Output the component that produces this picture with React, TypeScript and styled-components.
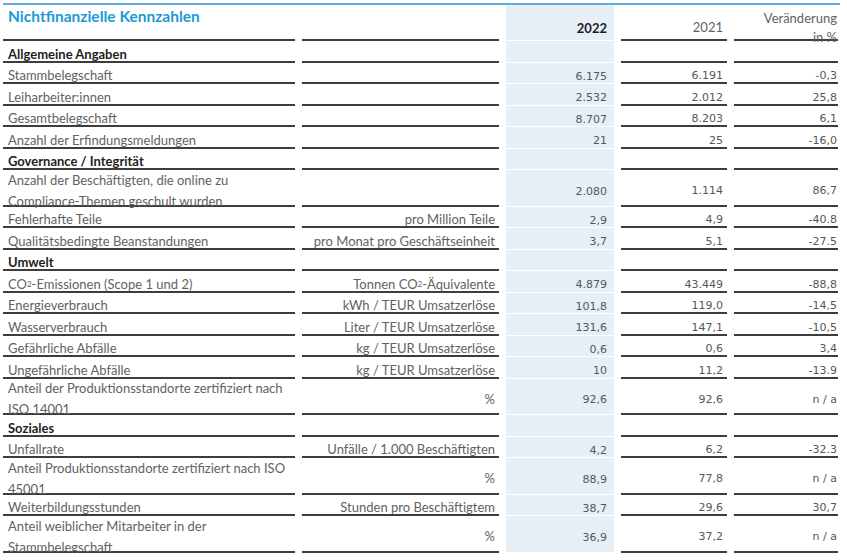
import React from "react";
import styled, { createGlobalStyle, css } from "styled-components";

const Global = createGlobalStyle`
  html, body { margin: 0; padding: 0; background: #ffffff; }
  body { font-family: "Lato", "Liberation Sans", sans-serif; }
`;

const Table = styled.div`
  margin-left: 3px;
  width: 837px;
  padding-right: 2px;
  box-sizing: border-box;
  border-top: 2px solid #62acd9;
  margin-top: 3px;
`;

const Row = styled.div<{ $h: number }>`
  display: grid;
  grid-template-columns: 292px 197px 108px 106px 104px;
  grid-template-rows: ${(p) => p.$h}px;
  column-gap: 7px;
  height: ${(p) => p.$h}px;
`;

const cellBase = css`
  box-sizing: border-box;
  display: flex;
  align-items: center;
  padding-top: 7px;
  line-height: 21px;
  border-bottom: 2px solid #3d3d3d;
  min-width: 0;
  min-height: 0;
`;

const LabelCell = styled.div<{ $bold?: boolean }>`
  ${cellBase};
  padding-left: 5px;
  font-size: 13px;
  white-space: nowrap;
  color: ${(p) => (p.$bold ? "#1e1e1e" : "#626262")};
  font-weight: ${(p) => (p.$bold ? 700 : 400)};
`;

const UnitCell = styled.div`
  ${cellBase};
  justify-content: flex-end;
  padding-right: 4px;
  font-size: 13px;
  white-space: nowrap;
  color: #626262;
`;

const NumCell = styled.div<{ $pr: number; $current?: boolean }>`
  ${cellBase};
  justify-content: flex-end;
  padding-right: ${(p) => p.$pr}px;
  font-family: "DejaVu Sans", "Liberation Sans", sans-serif;
  font-size: 11px;
  color: #575757;
  white-space: nowrap;
  ${(p) =>
    p.$current &&
    css`
      background: #e6eef8;
      border-bottom: 1px solid #ffffff;
    `}
`;

const HeadTitleCell = styled.div`
  box-sizing: border-box;
  border-bottom: 2px solid #3d3d3d;
  padding-left: 5px;
  padding-top: 1px;
  font-size: 15.5px;
  font-weight: 700;
  line-height: 20px;
  color: #1b9ad6;
  white-space: nowrap;
  min-height: 0;
`;

const HeadCell = styled.div<{ $pr: number; $current?: boolean; $bold?: boolean }>`
  box-sizing: border-box;
  display: flex;
  align-items: center;
  justify-content: flex-end;
  text-align: right;
  padding-top: 11px;
  padding-right: ${(p) => p.$pr}px;
  line-height: 19px;
  font-size: 13px;
  min-height: 0;
  color: ${(p) => (p.$bold ? "#1e1e1e" : "#626262")};
  font-weight: ${(p) => (p.$bold ? 700 : 400)};
  border-bottom: ${(p) => (p.$current ? "1px solid #ffffff" : "2px solid #3d3d3d")};
  background: ${(p) => (p.$current ? "#e6eef8" : "transparent")};
`;

const Sub = styled.sub`
  font-size: 8px;
  vertical-align: -2px;
  line-height: 0;
`;

type Item = {
  label: React.ReactNode;
  section?: boolean;
  tall?: boolean;
  unit?: React.ReactNode;
  v22?: string;
  v21?: string;
  chg?: string;
};

const CO2 = () => (
  <>
    CO<Sub>2</Sub>
  </>
);

const rows: Item[] = [
  { label: "Allgemeine Angaben", section: true },
  { label: "Stammbelegschaft", v22: "6.175", v21: "6.191", chg: "-0,3" },
  { label: "Leiharbeiter:innen", v22: "2.532", v21: "2.012", chg: "25,8" },
  { label: "Gesamtbelegschaft", v22: "8.707", v21: "8.203", chg: "6,1" },
  { label: "Anzahl der Erfindungsmeldungen", v22: "21", v21: "25", chg: "-16,0" },
  { label: "Governance / Integrität", section: true },
  {
    label: (
      <>
        Anzahl der Beschäftigten, die online zu
        <br />
        Compliance-Themen geschult wurden
      </>
    ),
    tall: true,
    v22: "2.080",
    v21: "1.114",
    chg: "86,7",
  },
  { label: "Fehlerhafte Teile", unit: "pro Million Teile", v22: "2,9", v21: "4,9", chg: "-40.8" },
  {
    label: "Qualitätsbedingte Beanstandungen",
    unit: "pro Monat pro Geschäftseinheit",
    v22: "3,7",
    v21: "5,1",
    chg: "-27.5",
  },
  { label: "Umwelt", section: true },
  {
    label: (
      <>
        <CO2 />
        -Emissionen (Scope 1 und 2)
      </>
    ),
    unit: (
      <>
        Tonnen <CO2 />
        -Äquivalente
      </>
    ),
    v22: "4.879",
    v21: "43.449",
    chg: "-88,8",
  },
  { label: "Energieverbrauch", unit: "kWh / TEUR Umsatzerlöse", v22: "101,8", v21: "119,0", chg: "-14,5" },
  { label: "Wasserverbrauch", unit: "Liter / TEUR Umsatzerlöse", v22: "131,6", v21: "147,1", chg: "-10,5" },
  { label: "Gefährliche Abfälle", unit: "kg / TEUR Umsatzerlöse", v22: "0,6", v21: "0,6", chg: "3,4" },
  { label: "Ungefährliche Abfälle", unit: "kg / TEUR Umsatzerlöse", v22: "10", v21: "11,2", chg: "-13.9" },
  {
    label: (
      <>
        Anteil der Produktionsstandorte zertifiziert nach
        <br />
        ISO 14001
      </>
    ),
    tall: true,
    unit: "%",
    v22: "92,6",
    v21: "92,6",
    chg: "n / a",
  },
  { label: "Soziales", section: true },
  { label: "Unfallrate", unit: "Unfälle / 1.000 Beschäftigten", v22: "4,2", v21: "6,2", chg: "-32.3" },
  {
    label: (
      <>
        Anteil Produktionsstandorte zertifiziert nach ISO
        <br />
        45001
      </>
    ),
    tall: true,
    unit: "%",
    v22: "88,9",
    v21: "77,8",
    chg: "n / a",
  },
  { label: "Weiterbildungsstunden", unit: "Stunden pro Beschäftigtem", v22: "38,7", v21: "29,6", chg: "30,7" },
  {
    label: (
      <>
        Anteil weiblicher Mitarbeiter in der
        <br />
        Stammbelegschaft
      </>
    ),
    tall: true,
    unit: "%",
    v22: "36,9",
    v21: "37,2",
    chg: "n / a",
  },
];

export default function App() {
  return (
    <>
      <Global />
      <Table>
        <Row $h={36}>
          <HeadTitleCell>Nichtfinanzielle Kennzahlen</HeadTitleCell>
          <HeadCell $pr={4} />
          <HeadCell $pr={7} $current $bold>
            2022
          </HeadCell>
          <HeadCell $pr={4}>2021</HeadCell>
          <HeadCell $pr={1}>
            Veränderung
            <br />
            in %
          </HeadCell>
        </Row>
        {rows.map((r, i) => (
          <Row key={i} $h={r.tall ? 36.5 : 21.5}>
            <LabelCell $bold={r.section}>{r.label}</LabelCell>
            <UnitCell>{r.unit}</UnitCell>
            <NumCell $pr={7} $current>
              {r.v22}
            </NumCell>
            <NumCell $pr={4}>{r.v21}</NumCell>
            <NumCell $pr={1}>{r.chg}</NumCell>
          </Row>
        ))}
      </Table>
    </>
  );
}
